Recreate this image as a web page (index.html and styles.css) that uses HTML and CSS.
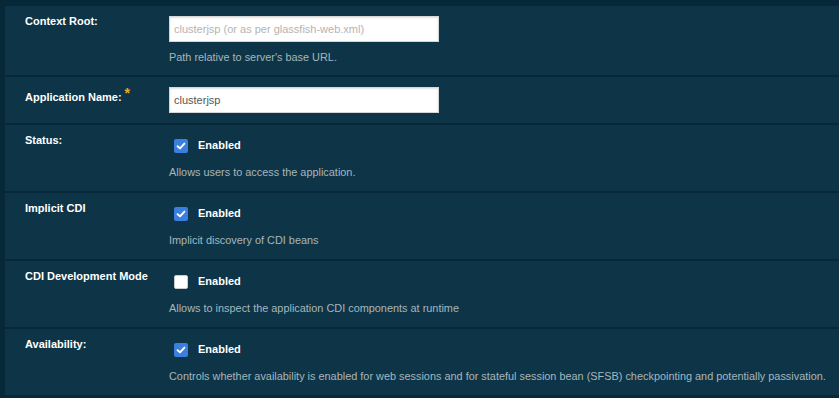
FILE: index.html
```html
<!DOCTYPE html>
<html>
<head>
<meta charset="utf-8">
<link rel="stylesheet" href="styles.css">
</head>
<body>
<div class="panel">
  <div class="row row-ctx">
    <div class="label">Context Root:</div>
    <div class="field">
      <input class="text" type="text" placeholder="clusterjsp (or as per glassfish-web.xml)">
      <div class="help help-ctx">Path relative to server's base URL.</div>
    </div>
  </div>
  <div class="row row-name">
    <div class="label label-mid">Application Name:<span class="req">*</span></div>
    <div class="field">
      <input class="text" type="text" value="clusterjsp">
    </div>
  </div>
  <div class="row row-check">
    <div class="label">Status:</div>
    <div class="field">
      <div class="check"><span class="box on"><svg viewBox="0 0 14 14" width="14" height="14"><path d="M3.6 7.2 L6 9.4 L10.4 4.6" fill="none" stroke="#fff" stroke-width="1.9" stroke-linecap="round" stroke-linejoin="round"/></svg></span><span class="cl">Enabled</span></div>
      <div class="help">Allows users to access the application.</div>
    </div>
  </div>
  <div class="row row-check">
    <div class="label">Implicit CDI</div>
    <div class="field">
      <div class="check"><span class="box on"><svg viewBox="0 0 14 14" width="14" height="14"><path d="M3.6 7.2 L6 9.4 L10.4 4.6" fill="none" stroke="#fff" stroke-width="1.9" stroke-linecap="round" stroke-linejoin="round"/></svg></span><span class="cl">Enabled</span></div>
      <div class="help">Implicit discovery of CDI beans</div>
    </div>
  </div>
  <div class="row row-check">
    <div class="label">CDI Development Mode</div>
    <div class="field">
      <div class="check"><span class="box off"></span><span class="cl">Enabled</span></div>
      <div class="help">Allows to inspect the application CDI components at runtime</div>
    </div>
  </div>
  <div class="row row-check">
    <div class="label">Availability:</div>
    <div class="field">
      <div class="check"><span class="box on"><svg viewBox="0 0 14 14" width="14" height="14"><path d="M3.6 7.2 L6 9.4 L10.4 4.6" fill="none" stroke="#fff" stroke-width="1.9" stroke-linecap="round" stroke-linejoin="round"/></svg></span><span class="cl">Enabled</span></div>
      <div class="help">Controls whether availability is enabled for web sessions and for stateful session bean (SFSB) checkpointing and potentially passivation.</div>
    </div>
  </div>
</div>
</body>
</html>
```
FILE: styles.css
```css
html, body {
  margin: 0;
  padding: 0;
  background: #062838;
  height: 100%;
}
body {
  font-family: "Liberation Sans", Arial, sans-serif;
  color: #fff;
}
.panel {
  padding: 6px 0 0 5px;
  display: flex;
  flex-direction: column;
  gap: 2px;
}
.row {
  background: #0e3547;
  display: grid;
  grid-template-columns: 164px 1fr;
}
.row-ctx { height: 69px; }
.row-name { height: 46px; }
.row-check { height: 66px; }
.label {
  padding: 8px 0 0 20px;
  font-size: 11px;
  font-weight: bold;
  line-height: 14px;
  color: #fff;
}
.label-mid { padding-top: 13px; }
.req {
  color: #f5a623;
  font-size: 14px;
  vertical-align: 3px;
  margin-left: 3px;
  line-height: 0;
}
.field {
  padding-top: 10px;
}
.text {
  box-sizing: border-box;
  width: 270px;
  height: 26px;
  margin: 0;
  border: 1px solid #d6d6d6;
  border-radius: 0;
  background: #fff;
  box-shadow: inset 0 1px 2px rgba(0,0,0,0.12);
  padding: 0 4px;
  font-family: "Liberation Sans", Arial, sans-serif;
  font-size: 11px;
  color: #555;
  display: block;
  outline: none;
}
.text::placeholder { color: #b4b4b4; }
.help {
  font-size: 10.9px;
  line-height: 13px;
  color: #a7b6bd;
  margin-top: 13px;
}
.help-ctx { margin-top: 9px; }
.check {
  display: flex;
  align-items: center;
  margin-left: 5px;
  margin-top: 4px;
  height: 14px;
}
.box {
  width: 14px;
  height: 14px;
  border-radius: 2px;
  box-sizing: border-box;
  display: block;
}
.box svg { display: block; }
.box.on { background: #3a7ee0; }
.box.off { background: #fff; border: 1px solid #c8ccd0; }
.cl {
  margin-left: 10px;
  font-size: 11px;
  font-weight: bold;
  color: #fff;
  position: relative;
  top: -1px;
}
```
